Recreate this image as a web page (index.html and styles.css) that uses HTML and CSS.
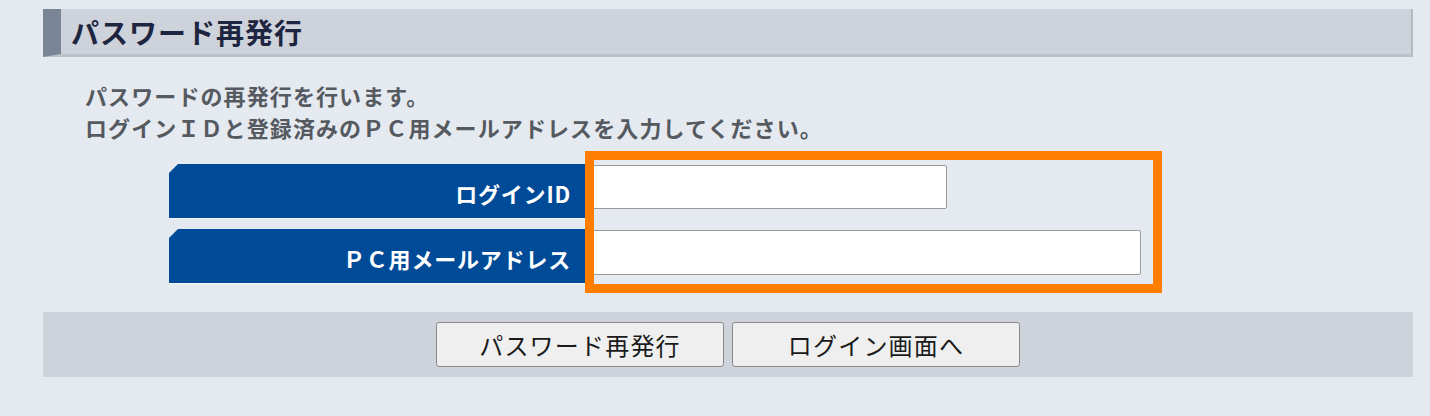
FILE: index.html
```html
<!DOCTYPE html>
<html lang="ja">
<head>
<meta charset="utf-8">
<title>パスワード再発行</title>
<link rel="stylesheet" href="styles.css">
</head>
<body>
<div class="page">
  <h2 class="section-title">パスワード再発行</h2>
  <div class="intro">
    <p>パスワードの再発行を行います。</p>
    <p>ログインＩＤと登録済みのＰＣ用メールアドレスを入力してください。</p>
  </div>
  <div class="form-area">
    <div class="form-grid">
      <div class="label">ログインID</div>
      <div class="field"><input type="text" class="input input-id"></div>
      <div class="label">ＰＣ用メールアドレス</div>
      <div class="field"><input type="text" class="input input-mail"></div>
    </div>
    <div class="highlight"></div>
  </div>
  <div class="button-bar">
    <button class="btn">パスワード再発行</button>
    <button class="btn">ログイン画面へ</button>
  </div>
</div>
</body>
</html>
```
FILE: styles.css
```css
html, body {
  margin: 0;
  padding: 0;
  background: #e5e9f0;
  font-family: "Noto Sans CJK JP", "Noto Sans", sans-serif;
}
.page {
  margin: 9px 17px 0 43px;
  width: 1370px;
}
.section-title {
  margin: 0;
  height: 45px;
  line-height: 47px;
  background: #ced2da;
  border-left: 18px solid #7a8497;
  border-right: 2px solid #b6bac2;
  border-bottom: 3px solid #bcc0c7;
  padding-left: 10px;
  font-size: 28px;
  letter-spacing: 1px;
  font-weight: bold;
  color: #1d2540;
}
.intro {
  padding: 22px 0 0 42px;
  color: #555a60;
  font-weight: bold;
  font-size: 22px;
  letter-spacing: 1.1px;
}
.intro p {
  margin: 0;
  line-height: 32px;
}
.form-area {
  position: relative;
  padding: 21px 0 0 126px;
  height: 131px;
}
.form-grid {
  display: grid;
  grid-template-columns: 416px 1fr;
  column-gap: 7px;
  row-gap: 10px;
}
.label {
  background: #004b98;
  border-bottom: 1px solid #f4f6f9;
  clip-path: polygon(9px 0, 100% 0, 100% 100%, 0 100%, 0 9px);
  color: #fff;
  font-weight: bold;
  font-size: 22px;
  letter-spacing: 0.8px;
  text-align: right;
  padding-right: 14px;
  line-height: 58px;
  box-sizing: border-box;
  height: 55px;
}
.field {
  padding-top: 1px;
}
.input {
  display: block;
  box-sizing: border-box;
  height: 44px;
  background: #fff;
  border: 1px solid #9a9a9a;
  border-radius: 2px;
  margin: 0;
}
.input-id { width: 355px; }
.input-mail { width: 549px; height: 45px; }
.highlight {
  position: absolute;
  left: 542px;
  top: 8px;
  width: 559px;
  height: 124px;
  border: 9px solid #ff7d00;
}
.button-bar {
  margin-top: 17px;
  height: 65px;
  background: #ced2da;
  display: flex;
  justify-content: center;
  align-items: center;
  gap: 8px;
}
.btn {
  width: 288px;
  height: 45px;
  background: #efefef;
  border: 1px solid #8a8a8a;
  border-radius: 3px;
  font-family: "Noto Sans CJK JP", "Noto Sans", sans-serif;
  font-size: 24px;
  letter-spacing: 1.2px;
  color: #1a1a1a;
  padding: 0;
}
```
